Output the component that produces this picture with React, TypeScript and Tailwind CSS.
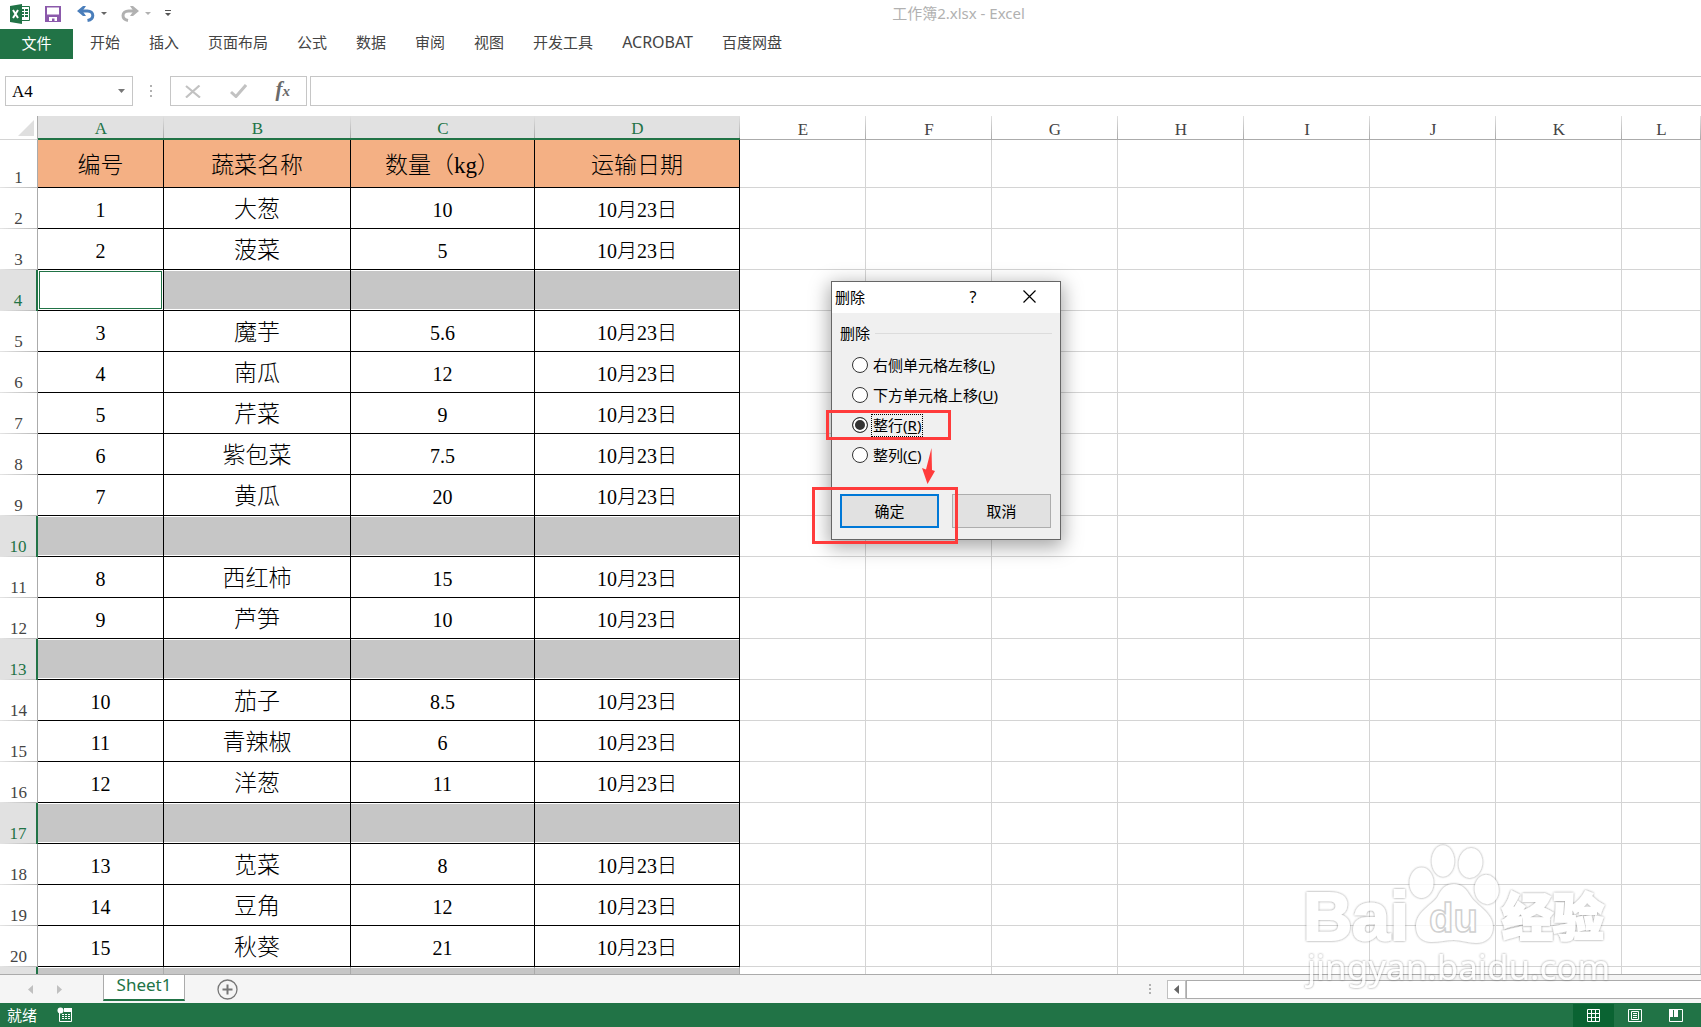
import React, { useState } from 'react';
import clsx from 'clsx';

const tabs = ['开始', '插入', '页面布局', '公式', '数据', '审阅', '视图', '开发工具', 'ACROBAT', '百度网盘'];

const columns = ['A', 'B', 'C', 'D', 'E', 'F', 'G', 'H', 'I', 'J', 'K', 'L'];

const columnWidths = [
  'w-[126px]', 'w-[187px]', 'w-[184px]', 'w-[205px]',
  'w-[126px]', 'w-[126px]', 'w-[126px]', 'w-[126px]', 'w-[126px]', 'w-[126px]', 'w-[126px]', '',
];

// an empty array is a blank, selected row
const rows: string[][] = [
  ['编号', '蔬菜名称', '数量（kg）', '运输日期'],
  ['1', '大葱', '10', '10月23日'],
  ['2', '菠菜', '5', '10月23日'],
  [],
  ['3', '魔芋', '5.6', '10月23日'],
  ['4', '南瓜', '12', '10月23日'],
  ['5', '芹菜', '9', '10月23日'],
  ['6', '紫包菜', '7.5', '10月23日'],
  ['7', '黄瓜', '20', '10月23日'],
  [],
  ['8', '西红柿', '15', '10月23日'],
  ['9', '芦笋', '10', '10月23日'],
  [],
  ['10', '茄子', '8.5', '10月23日'],
  ['11', '青辣椒', '6', '10月23日'],
  ['12', '洋葱', '11', '10月23日'],
  [],
  ['13', '苋菜', '8', '10月23日'],
  ['14', '豆角', '12', '10月23日'],
  ['15', '秋葵', '21', '10月23日'],
  [],
];

const deleteOptions = [
  { id: 'left', label: '右侧单元格左移', key: 'L' },
  { id: 'up', label: '下方单元格上移', key: 'U' },
  { id: 'row', label: '整行', key: 'R' },
  { id: 'col', label: '整列', key: 'C' },
];

const QuickAccess: React.FC = () => (
  <div className="flex w-[180px] items-center">
    <svg className="ml-[9px] size-[22px]" viewBox="0 0 22 22" aria-label="Excel">
      <path d="M11 3.5h9.5v14H11z" fill="#fff" stroke="#217346" />
      <path d="M12 6h3v2h-3zM16 6h3v2h-3zM12 9h3v2h-3zM16 9h3v2h-3zM12 12h3v2h-3zM16 12h3v2h-3z" fill="#217346" />
      <path d="M1 3l12-2v20L1 19z" fill="#217346" />
      <path d="M4 7l5 8M9 7l-5 8" stroke="#fff" strokeWidth="2" />
    </svg>
    <button type="button" aria-label="保存" className="ml-3.5">
      <svg className="size-4" viewBox="0 0 16 16">
        <path d="M0 0h16v16H0z" fill="#8b59ab" />
        <path d="M2 1.5h12v7H2zM4 11h8v4H9.5v-2.5H7V15H4z" fill="#fff" />
      </svg>
    </button>
    <button type="button" aria-label="撤消" className="ml-4 flex items-center gap-1.5">
      <svg className="h-4 w-[18px]" viewBox="0 0 18 16" fill="none" stroke="#4a7ebb">
        <path d="M3 5h7.5c3 0 5.3 1.7 5.3 4.5s-2.3 4.5-5.3 5" strokeWidth="3" />
        <path d="M0 5L6 0h3L5.5 5L9 10H6z" fill="#4a7ebb" stroke="none" />
      </svg>
      <svg className="h-[3px] w-1.5" viewBox="0 0 6 3"><path d="M0 0h6L3 3z" fill="#666" /></svg>
    </button>
    <button type="button" aria-label="恢复" className="ml-3.5 flex items-center gap-1.5">
      <svg className="h-4 w-[18px]" viewBox="0 0 18 16" fill="none" stroke="#b1b1b1">
        <path d="M15 5H7.5C4.5 5 2 6.7 2 9.5S4.5 14 7 14.5" strokeWidth="3" />
        <path d="M18 5L12 0H9l3.5 5L9 10h3z" fill="#b1b1b1" stroke="none" />
      </svg>
      <svg className="h-[3px] w-1.5" viewBox="0 0 6 3"><path d="M0 0h6L3 3z" fill="#b1b1b1" /></svg>
    </button>
    <button type="button" aria-label="自定义快速访问工具栏" className="ml-3.5">
      <svg className="h-[7px] w-1.5" viewBox="0 0 6 7"><path d="M0 0h6v1H0zM0 3h6L3 6z" fill="#555" /></svg>
    </button>
  </div>
);

const FormulaBar: React.FC = () => (
  <div className="mt-[17px] mb-2.5 flex h-[30px] pl-[5px]">
    <div className="flex w-32 items-center border border-[#c6c6c6] pr-[7px] pl-1.5">
      <input
        aria-label="名称框"
        defaultValue="A4"
        className="w-full min-w-0 pt-0.5 font-['Liberation_Serif','Noto_Sans_CJK_SC',serif] text-[17px] text-black outline-none"
      />
      <svg className="h-1 w-[7px] shrink-0" viewBox="0 0 7 4"><path d="M0 0h7L3.5 4z" fill="#777" /></svg>
    </div>
    <div className="flex w-9 items-center justify-center">
      <svg className="h-3 w-0.5" viewBox="0 0 2 12"><path d="M0 0h2v2H0zM0 5h2v2H0zM0 10h2v2H0z" fill="#b1b1b1" /></svg>
    </div>
    <div className="ml-px flex w-[137px] items-center justify-between border border-[#c6c6c6] pr-4 pl-3.5">
      <button type="button" aria-label="取消输入">
        <svg className="h-[13px] w-4" viewBox="0 0 16 13"><path d="M1 1l14 11.5M14.5 .5L1 12.5" stroke="#c2c2c2" strokeWidth="2.2" /></svg>
      </button>
      <button type="button" aria-label="输入">
        <svg className="h-[14px] w-[17px]" viewBox="0 0 17 14"><path d="M1 8l5 4.5L16 1" fill="none" stroke="#c2c2c2" strokeWidth="3" /></svg>
      </button>
      <button
        type="button"
        aria-label="插入函数"
        className="pb-1 font-['Liberation_Serif',serif] text-[21px] leading-none font-bold text-[#6a6a6a] italic"
      >
        f<span className="text-[15px]">x</span>
      </button>
    </div>
    <input aria-label="编辑栏" className="ml-[3px] min-w-0 flex-1 border border-r-0 border-[#c6c6c6] px-2 outline-none" />
  </div>
);

const Sheet: React.FC = () => (
  <div className="min-h-0 flex-1 overflow-hidden">
    <table className="w-full table-fixed border-separate border-spacing-0 font-['Liberation_Serif','Noto_Sans_CJK_SC',serif] leading-none font-light">
      <colgroup>
        <col className="w-[38px]" />
        {columns.map((c, i) => (
          <col key={c} className={columnWidths[i]} />
        ))}
      </colgroup>
      <thead>
        <tr className="h-6 text-[17px] leading-none">
          <th className="border-r border-b border-[#ababab] border-b-[#d4d4d4] p-0 pr-[3px] pb-[3px] align-bottom">
            <svg className="ml-auto size-4" viewBox="0 0 16 16"><path d="M16 0v16H0z" fill="#dfdfdf" /></svg>
          </th>
          {columns.map((c, i) => (
            <th
              key={c}
              scope="col"
              className={clsx(
                'bg-[linear-gradient(#e0e0e0,#ababab)] bg-[length:1px_100%] bg-right bg-no-repeat p-0 pt-[3px] font-normal',
                i < 4
                  ? 'border-b-2 border-[#217346] bg-[#e1e1e1] text-[#217346]'
                  : 'border-b border-[#ababab] text-[#444]',
              )}
            >
              {c}
            </th>
          ))}
        </tr>
      </thead>
      <tbody>
        {rows.map((row, r) => {
          const selected = row.length === 0;
          const last = r === rows.length - 1;
          return (
            <tr key={r} className={r === 0 ? 'h-12' : 'h-[41px]'}>
              <th
                scope="row"
                className={clsx(
                  'bg-[linear-gradient(to_right,#e4e4e4,#b8b8b8)] bg-[length:100%_1px] bg-bottom bg-no-repeat p-0 pb-0.5 align-bottom text-[17px] font-normal',
                  selected
                    ? 'border-r-2 border-[#217346] bg-[#e1e1e1] text-[#217346]'
                    : 'border-r border-[#ababab] text-[#444]',
                )}
              >
                {last ? '' : r + 1}
              </th>
              {columns.map((c, i) => (
                <td
                  key={c}
                  className={clsx(
                    'border-r border-b p-0 pt-[3px] text-center whitespace-nowrap',
                    i < 4 ? 'text-black' : 'border-[#d4d4d4]',
                    i < 4 && (last ? 'border-[#ababab]' : 'border-black'),
                    r === 0 || i === 1 ? 'text-[23px]' : 'text-[20px]',
                    r === 0 && i < 4 && 'bg-[#f4b084]',
                    selected && i < 4 && !(r === 3 && i === 0) &&
                      'bg-[#c6c6c6] shadow-[inset_0_1px_0_#fff,inset_0_-1px_0_#fff]',
                    r === 3 && i === 0 && 'shadow-[inset_0_0_0_1px_#fff,inset_0_0_0_2px_#217346]',
                  )}
                >
                  {row[i]}
                </td>
              ))}
            </tr>
          );
        })}
      </tbody>
    </table>
  </div>
);

const SheetTabs: React.FC = () => (
  <div className="flex h-[29px] shrink-0 border-t border-[#ababab] bg-[#f5f5f5]">
    <div className="flex w-[103px] items-center gap-6 pl-7">
      <button type="button" aria-label="上一张">
        <svg className="h-[9px] w-[5px]" viewBox="0 0 5 9"><path d="M5 0v9L0 4.5z" fill="#c0c0c0" /></svg>
      </button>
      <button type="button" aria-label="下一张">
        <svg className="h-[9px] w-[5px]" viewBox="0 0 5 9"><path d="M0 0v9l5-4.5z" fill="#c0c0c0" /></svg>
      </button>
    </div>
    <button
      type="button"
      className="h-[26px] w-[82px] border-x border-b-2 border-x-[#ababab] border-b-[#217346] bg-white pb-1 font-['Noto_Sans',sans-serif] text-[17px] leading-5 text-[#217346]"
    >
      Sheet1
    </button>
    <button type="button" aria-label="新工作表" className="ml-8">
      <svg className="size-[21px]" viewBox="0 0 21 21" fill="none" stroke="#777">
        <circle cx="10.5" cy="10.5" r="9.5" strokeWidth="1.3" />
        <path d="M10.5 5.5v10M5.5 10.5h10" strokeWidth="2" />
      </svg>
    </button>
    <div className="ml-auto flex w-[552px] items-center">
      <svg className="h-2.5 w-0.5" viewBox="0 0 2 10"><path d="M0 0h2v2H0zM0 4h2v2H0zM0 8h2v2H0z" fill="#b1b1b1" /></svg>
      <button type="button" aria-label="向左滚动" className="ml-4 flex h-[19px] w-[19px] items-center justify-center border border-[#c0c0c0] bg-white">
        <svg className="h-[9px] w-[5px]" viewBox="0 0 5 9"><path d="M5 0v9L0 4.5z" fill="#666" /></svg>
      </button>
      <div className="h-[19px] flex-1 border border-r-0 border-[#ababab] bg-white" />
    </div>
  </div>
);

const StatusBar: React.FC = () => (
  <div className="flex h-6 shrink-0 items-center bg-[#217346] pr-[5px] pl-[7px] text-white">
    <span>就绪</span>
    <button type="button" aria-label="录制宏" className="ml-5">
      <svg className="size-4" viewBox="0 0 16 16">
        <path d="M2.5 5v9.5h12V2H7" fill="none" stroke="#fff" />
        <path d="M7 1h8v4H7zM5 7h2v1H5zM8 7h2v1H8zM11 7h2v1h-2zM5 9h2v1H5zM8 9h2v1H8zM11 9h2v1h-2zM5 11h2v1H5zM8 11h2v1H8zM11 11h2v1h-2z" fill="#fff" />
        <circle cx="3.5" cy="3.5" r="3" fill="#fff" />
      </svg>
    </button>
    <div className="ml-auto flex h-full pt-px">
      <button type="button" aria-label="普通" className="flex w-[41px] items-center justify-center bg-[#0a6332]">
        <svg className="size-[13px]" viewBox="0 0 13 13"><path d="M.5 .5h12v12H.5zM4.5 0v13M8.5 0v13M0 4.5h13M0 8.5h13" fill="none" stroke="#fff" /></svg>
      </button>
      <button type="button" aria-label="页面布局视图" className="flex w-[41px] items-center justify-center">
        <svg className="h-[13px] w-3.5" viewBox="0 0 14 13"><path d="M.5 .5h13v12H.5zM3.5 2.5h7v8h-7zM5 4.5h4M5 6.5h4M5 8.5h4" fill="none" stroke="#fff" /></svg>
      </button>
      <button type="button" aria-label="分页预览" className="flex w-[41px] items-center justify-center">
        <svg className="h-[13px] w-3.5" viewBox="0 0 14 13">
          <path d="M.5 .5h13v12H.5z" fill="none" stroke="#fff" />
          <path d="M0 0h4v8H0zM5 0h4v8H5z" fill="#fff" />
        </svg>
      </button>
    </div>
  </div>
);

const DeleteDialog: React.FC = () => {
  const [choice, setChoice] = useState('row');

  return (
    <div
      role="dialog"
      aria-label="删除"
      className="absolute top-[281px] left-[831px] w-[230px] border border-[#666] bg-[#f0f0f0] pb-[11px] text-black shadow-[0_5px_18px_2px_rgba(0,0,0,0.35)]"
    >
      <div className="flex h-[31px] items-center bg-white pb-0.5 pl-[3px]">
        <span>删除</span>
        <button type="button" aria-label="帮助" className="ml-auto w-8 text-base">?</button>
        <button type="button" aria-label="关闭" className="mr-6 ml-[34px]">
          <svg className="size-[13px]" viewBox="0 0 13 13"><path d="M.5 .5l12 12M12.5 .5l-12 12" stroke="#000" strokeWidth="1.2" /></svg>
        </button>
      </div>
      <fieldset>
        <legend className="flex w-full items-center gap-[5px] px-2 pt-2 leading-6">
          删除
          <span className="h-px flex-1 bg-[#dcdcdc]" />
        </legend>
        <div className="mt-[5px] flex flex-col pl-5">
          {deleteOptions.map(o => (
            <label key={o.id} className="flex h-[30px] items-center gap-[3px]">
              <input
                type="radio"
                name="delete"
                className="size-4 appearance-none rounded-full border border-[#333] bg-white checked:bg-[#333] checked:shadow-[inset_0_0_0_2px_#fff]"
                checked={choice === o.id}
                onChange={() => setChoice(o.id)}
              />
              <span className={clsx('border border-dotted px-px leading-[21px]', choice === o.id ? 'border-black' : 'border-transparent')}>
                {o.label}(<u className="underline-offset-2">{o.key}</u>)
              </span>
            </label>
          ))}
        </div>
      </fieldset>
      <div className="mt-6 flex gap-[13px] px-2">
        <button type="button" className="h-[34px] w-[99px] border-2 border-[#0078d7] bg-[#e1e1e1]">确定</button>
        <button type="button" className="h-[34px] w-[99px] border border-[#adadad] bg-[#e1e1e1]">取消</button>
      </div>
      <div className="pointer-events-none absolute top-[128px] left-[-6px] h-[30px] w-[125px] border-3 border-[#ff3b3b]" />
      <div className="pointer-events-none absolute top-[205px] left-[-20px] h-[57px] w-[146px] border-3 border-[#ff3b3b]" />
      <svg className="pointer-events-none absolute top-[166px] left-[90px] h-9 w-[13px]" viewBox="0 0 13 36">
        <path d="M9.5 0L10 22l3 1L5.5 36L0 20l4 1.5z" fill="#ff3b3b" />
      </svg>
    </div>
  );
};

const Watermark: React.FC = () => (
  <svg className="pointer-events-none absolute right-0 bottom-0 h-[207px] w-[421px]" viewBox="0 0 421 207" aria-hidden="true">
    <defs>
      <filter id="glow" x="-5%" y="-5%" width="110%" height="110%">
        <feDropShadow dx="0" dy="0" stdDeviation="1.2" floodColor="#555" floodOpacity="0.8" />
      </filter>
    </defs>
    <g fill="#fff" filter="url(#glow)" opacity="0.85">
      <text x="23" y="120" fontSize="68" fontWeight="700" fontFamily="Liberation Sans, sans-serif" stroke="#fff" strokeWidth="2">Bai</text>
      <ellipse cx="141.5" cy="62.7" rx="12" ry="15.3" />
      <ellipse cx="163" cy="41" rx="11.3" ry="15.7" />
      <ellipse cx="190.5" cy="43" rx="11.8" ry="15" transform="rotate(8 190.5 43)" />
      <ellipse cx="206.7" cy="69.5" rx="12" ry="14.7" transform="rotate(-8 206.7 69.5)" />
      <path d="M174 64c-8 0-12 4-16 12c-4 8-22 15-22 30c0 11 7 16 15 16c9 0 16-2 23-2s14 3 22 3c10 0 17-6 17-16c0-14-17-22-22-30c-5-8-9-13-17-13z" />
      <text x="222" y="116" fontSize="51" fontWeight="900" fontFamily="Noto Sans CJK SC, sans-serif" stroke="#fff" strokeWidth="2">经验</text>
      <text x="27" y="160" fontSize="35" fontFamily="Noto Sans, sans-serif">jingyan.baidu.com</text>
    </g>
    <text x="149" y="112" fontSize="40" fontFamily="Liberation Sans, sans-serif" fontWeight="700" fill="#fff" stroke="#d0d0d0" strokeWidth="1.5">du</text>
  </svg>
);

const App: React.FC = () => {
  return (
    <div className="relative flex h-screen flex-col overflow-hidden bg-white font-['Noto_Sans','Noto_Sans_CJK_SC',sans-serif] text-[15px] leading-5">
      <header className="flex h-[29px] shrink-0 items-center pb-0.5">
        <QuickAccess />
        <h1 className="flex-1 pb-0.5 pl-9 text-center text-[#b1b1b1]">工作簿2.xlsx - Excel</h1>
      </header>
      <nav className="flex h-[30px] shrink-0 items-center text-[#444]">
        <button type="button" className="h-full w-[73px] bg-[#217346] pb-0.5 text-white">文件</button>
        <div className="ml-[17px] flex gap-[29px]">
          {tabs.map(t => (
            <button key={t} type="button" className={clsx('pb-1', t === 'ACROBAT' && 'text-[16px]')}>{t}</button>
          ))}
        </div>
      </nav>
      <FormulaBar />
      <Sheet />
      <SheetTabs />
      <StatusBar />
      <DeleteDialog />
      <Watermark />
    </div>
  );
};

export default App;
